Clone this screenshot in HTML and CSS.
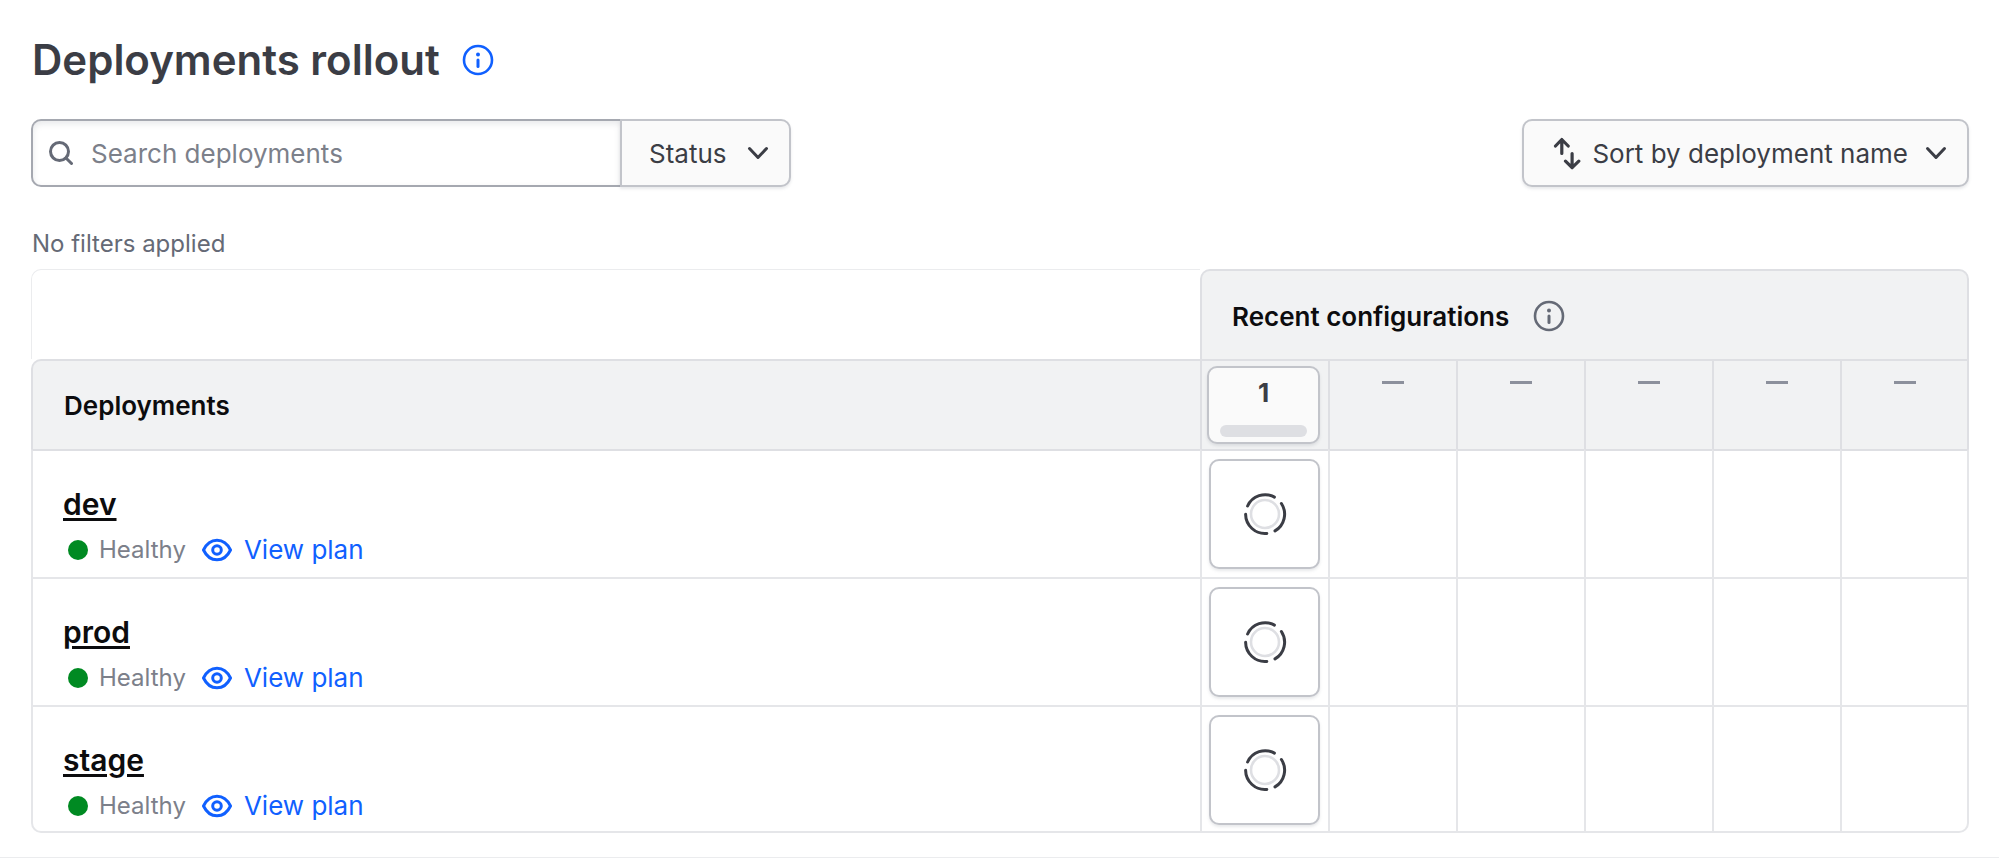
FILE: index.html
```html
<!DOCTYPE html>
<html lang="en">
<head>
    <meta charset="UTF-8">
    <meta name="viewport" content="width=device-width, initial-scale=1.0">
    <title>Deployments rollout</title>
    <link rel="stylesheet" href="styles.css">
</head>
<body>

    <!-- Shared icons -->
    <svg class="sprite" aria-hidden="true">
        <symbol id="info" viewBox="0 0 32 32">
            <circle cx="16" cy="16" r="14" fill="none" stroke="currentColor" stroke-width="2.6"/>
            <circle cx="16" cy="10.4" r="2" fill="currentColor"/>
            <path d="M16 16v6.4" fill="none" stroke="currentColor" stroke-width="3" stroke-linecap="round"/>
        </symbol>
        <symbol id="chevron" viewBox="0 0 22 14">
            <path d="M2.5 2.5l8.5 9 8.5-9" fill="none" stroke="currentColor" stroke-width="3" stroke-linecap="round" stroke-linejoin="round"/>
        </symbol>
        <symbol id="eye" viewBox="0 0 30 24">
            <path d="M1.5 12C4.5 5.7 9 2.2 15 2.2S25.5 5.7 28.5 12C25.5 18.3 21 21.8 15 21.8S4.5 18.3 1.5 12z" fill="none" stroke="currentColor" stroke-width="3" stroke-linejoin="round"/>
            <circle cx="15" cy="12" r="4.3" fill="none" stroke="currentColor" stroke-width="3"/>
        </symbol>
        <symbol id="spinner" viewBox="-22 -22 44 44">
            <circle r="14" fill="none" stroke="#dedfe3" stroke-width="2.6"/>
            <path d="M-17.4-8A19.2 19.2 0 0 1 9.4-16.9M16.4-10.5A19.4 19.4 0 0 1 10 16.9M1.8 19.4A19.4 19.4 0 0 1-19.4.3" fill="none" stroke="#3b3d45" stroke-width="3" stroke-linecap="round"/>
        </symbol>
    </svg>

    <main class="page">
        <header class="page-header">
            <h1>Deployments rollout</h1>
            <button class="info-btn info-blue" type="button" aria-label="About deployments rollout">
                <svg><use href="#info"/></svg>
            </button>
        </header>

        <div class="toolbar">
            <div class="filter-group">
                <label class="search">
                    <svg viewBox="0 0 24 24" fill="none" stroke="currentColor" stroke-width="3" stroke-linecap="round">
                        <circle cx="10.5" cy="10.5" r="9"/>
                        <path d="M17 17l5.5 5.5"/>
                    </svg>
                    <input type="search" placeholder="Search deployments" aria-label="Search deployments">
                </label>
                <button class="btn btn-status" type="button" aria-haspopup="true">
                    Status
                    <svg class="chevron"><use href="#chevron"/></svg>
                </button>
            </div>
            <button class="btn btn-sort" type="button" aria-haspopup="true">
                <svg class="sort-icon" viewBox="0 0 28 33" fill="none" stroke="currentColor" stroke-width="3.2" stroke-linecap="round" stroke-linejoin="round">
                    <path d="M2.5 9l6.300-6.500L15.200 9M8.800 2.500v14M12.500 24.200l6.600 6.500 6.700-6.500M19.100 30.700V16.500"/>
                </svg>
                <span class="sort-label">Sort by deployment name</span>
                <svg class="chevron"><use href="#chevron"/></svg>
            </button>
        </div>

        <p class="filters">No filters applied</p>

        <table class="rollout">
            <colgroup>
                <col>
                <col class="col-config">
                <col class="col-config">
                <col class="col-config">
                <col class="col-config">
                <col class="col-config">
                <col class="col-last">
            </colgroup>
            <thead>
                <tr>
                    <td class="blank"></td>
                    <th class="recent" colspan="6" scope="colgroup">
                        <div class="recent-inner">
                            Recent configurations
                            <button class="info-btn" type="button" aria-label="About recent configurations">
                                <svg><use href="#info"/></svg>
                            </button>
                        </div>
                    </th>
                </tr>
                <tr>
                    <th class="name-head" scope="col">Deployments</th>
                    <th class="config" scope="col">
                        <button class="config-btn" type="button">
                            1
                            <span class="bar"></span>
                        </button>
                    </th>
                    <th class="config" scope="col"><span class="dash"></span></th>
                    <th class="config" scope="col"><span class="dash"></span></th>
                    <th class="config" scope="col"><span class="dash"></span></th>
                    <th class="config" scope="col"><span class="dash"></span></th>
                    <th class="config" scope="col"><span class="dash"></span></th>
                </tr>
            </thead>
            <tbody>
                <tr>
                    <td class="deployment">
                        <a class="name" href="#dev">dev</a>
                        <div class="meta">
                            <span class="dot"></span>
                            <span class="health">Healthy</span>
                            <a class="plan" href="#dev-plan"><svg><use href="#eye"/></svg>View plan</a>
                        </div>
                    </td>
                    <td class="cell"><button class="run" type="button" aria-label="dev, configuration 1"><svg><use href="#spinner"/></svg></button></td>
                    <td class="cell"></td>
                    <td class="cell"></td>
                    <td class="cell"></td>
                    <td class="cell"></td>
                    <td class="cell"></td>
                </tr>
                <tr>
                    <td class="deployment">
                        <a class="name" href="#prod">prod</a>
                        <div class="meta">
                            <span class="dot"></span>
                            <span class="health">Healthy</span>
                            <a class="plan" href="#prod-plan"><svg><use href="#eye"/></svg>View plan</a>
                        </div>
                    </td>
                    <td class="cell"><button class="run" type="button" aria-label="prod, configuration 1"><svg><use href="#spinner"/></svg></button></td>
                    <td class="cell"></td>
                    <td class="cell"></td>
                    <td class="cell"></td>
                    <td class="cell"></td>
                    <td class="cell"></td>
                </tr>
                <tr>
                    <td class="deployment">
                        <a class="name" href="#stage">stage</a>
                        <div class="meta">
                            <span class="dot"></span>
                            <span class="health">Healthy</span>
                            <a class="plan" href="#stage-plan"><svg><use href="#eye"/></svg>View plan</a>
                        </div>
                    </td>
                    <td class="cell"><button class="run" type="button" aria-label="stage, configuration 1"><svg><use href="#spinner"/></svg></button></td>
                    <td class="cell"></td>
                    <td class="cell"></td>
                    <td class="cell"></td>
                    <td class="cell"></td>
                    <td class="cell"></td>
                </tr>
            </tbody>
        </table>
    </main>

</body>
</html>
```
FILE: styles.css
```css
* {
    box-sizing: border-box;
}

body {
    font-family: Inter, "Liberation Sans", sans-serif;
    font-size: 26px;
    background-color: #fff;
    color: #3b3d45;
    margin: 0;
}

button, input {
    font: inherit;
    color: inherit;
}

button {
    cursor: pointer;
}

svg {
    display: block;
    flex: none;
}

.sprite {
    position: absolute;
    width: 0;
    height: 0;
}

.page {
    padding: 32px 30px 24px 31px;
    border-bottom: 1px solid #ebecee;
}

.page-header {
    display: flex;
    align-items: center;
    gap: 22px;
    height: 56px;
    padding-left: 1px;
}

h1 {
    margin: 0;
    font-size: 42px;
    font-weight: 600;
    line-height: 56px;
}

.info-btn {
    padding: 0;
    border: none;
    background: none;
    color: #656a76;
}

.info-btn svg {
    width: 32px;
    height: 32px;
}

.info-blue {
    color: #1060ff;
}

/* Search, filter and sort */
.toolbar {
    display: flex;
    justify-content: space-between;
    margin-top: 31px;
}

.filter-group {
    display: flex;
}

.search {
    display: flex;
    align-items: center;
    gap: 18px;
    width: 589px;
    height: 68px;
    padding: 0 16px;
    border: 2px solid #a5a8b0;
    border-right: none;
    border-radius: 10px 0 0 10px;
    box-shadow: inset 0 3px 6px rgba(101, 106, 118, 0.15);
    color: #656a76;
}

.search svg {
    width: 24px;
    height: 24px;
}

.search input {
    flex: 1;
    min-width: 0;
    padding: 0;
    border: none;
    outline: none;
    background: none;
}

.search input::placeholder {
    color: #7c808a;
    opacity: 1;
}

.btn {
    display: flex;
    align-items: center;
    height: 68px;
    border: 2px solid #c2c4ca;
    border-radius: 10px;
    background-color: #fafafa;
    box-shadow: 0 2px 3px rgba(101, 106, 118, 0.15);
}

.btn-status {
    gap: 20px;
    padding: 0 20px 0 27px;
    border-radius: 0 10px 10px 0;
}

.btn-sort {
    padding: 0 20px 0 29px;
}

.chevron {
    width: 22px;
    height: 14px;
}

.sort-icon {
    width: 28px;
    height: 33px;
}

.sort-label {
    margin: 0 17px 0 11px;
}

.filters {
    margin: 40px 0 8px;
    padding-left: 1px;
    color: #656a76;
    font-size: 24px;
    line-height: 34px;
}

/* Rollout table */
.rollout {
    width: 100%;
    table-layout: fixed;
    border-collapse: separate;
    border-spacing: 0;
}

.col-config {
    width: 128px;
}

.col-last {
    width: 129px;
}

.rollout th, .rollout td {
    padding: 0;
    border: 0 solid #e5e6e9;
    text-align: left;
}

.rollout th {
    border-color: #dedfe3;
    background-color: #f1f2f3;
    color: #0c0c0e;
    font-weight: 600;
}

.rollout thead tr {
    height: 90px;
}

.rollout tbody tr {
    height: 128px;
}

.rollout .blank {
    border: 1px solid #ebecee;
    border-width: 1px 0 0 1px;
    border-radius: 10px 0 0 0;
}

.rollout .recent {
    border-width: 2px 2px 0 2px;
    border-radius: 10px 10px 0 0;
}

.recent-inner {
    display: flex;
    align-items: center;
    gap: 24px;
    padding: 2px 0 0 30px;
}

.rollout .name-head {
    padding-left: 31px;
    border-width: 2px 0 0 2px;
    border-radius: 10px 0 0 0;
}

.rollout .config {
    padding: 5px;
    border-width: 2px 0 0 2px;
    vertical-align: top;
}

.rollout th:last-child, .rollout td:last-child {
    border-right-width: 2px;
}

.config-btn {
    display: flex;
    flex-direction: column;
    justify-content: space-between;
    align-items: center;
    width: 113px;
    height: 78px;
    padding: 8px 11px 5px;
    border: 2px solid #c2c4ca;
    border-radius: 10px;
    background-color: #fafafa;
    box-shadow: 0 2px 3px rgba(101, 106, 118, 0.15);
    color: #3b3d45;
    font-weight: 700;
    line-height: 34px;
}

.bar {
    width: 87px;
    height: 12px;
    border-radius: 6px;
    background-color: #dedfe3;
}

.dash {
    display: block;
    width: 22px;
    height: 3px;
    margin: 15px auto 0;
    background-color: #8c909c;
}

.rollout .deployment {
    padding: 35px 0 0 30px;
    border-width: 2px 0 0 2px;
    vertical-align: top;
}

.rollout tbody tr:first-child td {
    border-top-color: #dedfe3;
}

.name {
    display: block;
    width: fit-content;
    color: #0c0c0e;
    font-size: 30px;
    font-weight: 600;
    line-height: 36px;
    text-decoration-thickness: 3px;
    text-underline-offset: 3px;
}

.meta {
    display: flex;
    align-items: center;
    margin-top: 12px;
    padding-left: 5px;
    line-height: 32px;
}

.dot {
    width: 20px;
    height: 20px;
    border-radius: 50%;
    background-color: #008a22;
}

.health {
    margin: 0 16px 0 11px;
    color: #7c808a;
    font-size: 24px;
}

.plan {
    display: flex;
    align-items: center;
    gap: 12px;
    color: #1060ff;
    text-decoration: none;
}

.plan svg {
    width: 30px;
    height: 24px;
}

.rollout .cell {
    padding: 8px 6px 6px 7px;
    border-width: 2px 0 0 2px;
    vertical-align: top;
}

.run {
    display: flex;
    align-items: center;
    justify-content: center;
    width: 111px;
    height: 110px;
    padding: 0;
    border: 2px solid #c2c4ca;
    border-radius: 10px;
    background-color: #fff;
    box-shadow: 0 2px 3px rgba(101, 106, 118, 0.15);
}

.run svg {
    width: 44px;
    height: 44px;
}

.rollout tbody tr:last-child td {
    border-bottom-width: 2px;
}

.rollout tbody tr:last-child td:first-child {
    border-bottom-left-radius: 10px;
}

.rollout tbody tr:last-child td:last-child {
    border-bottom-right-radius: 10px;
}
```
